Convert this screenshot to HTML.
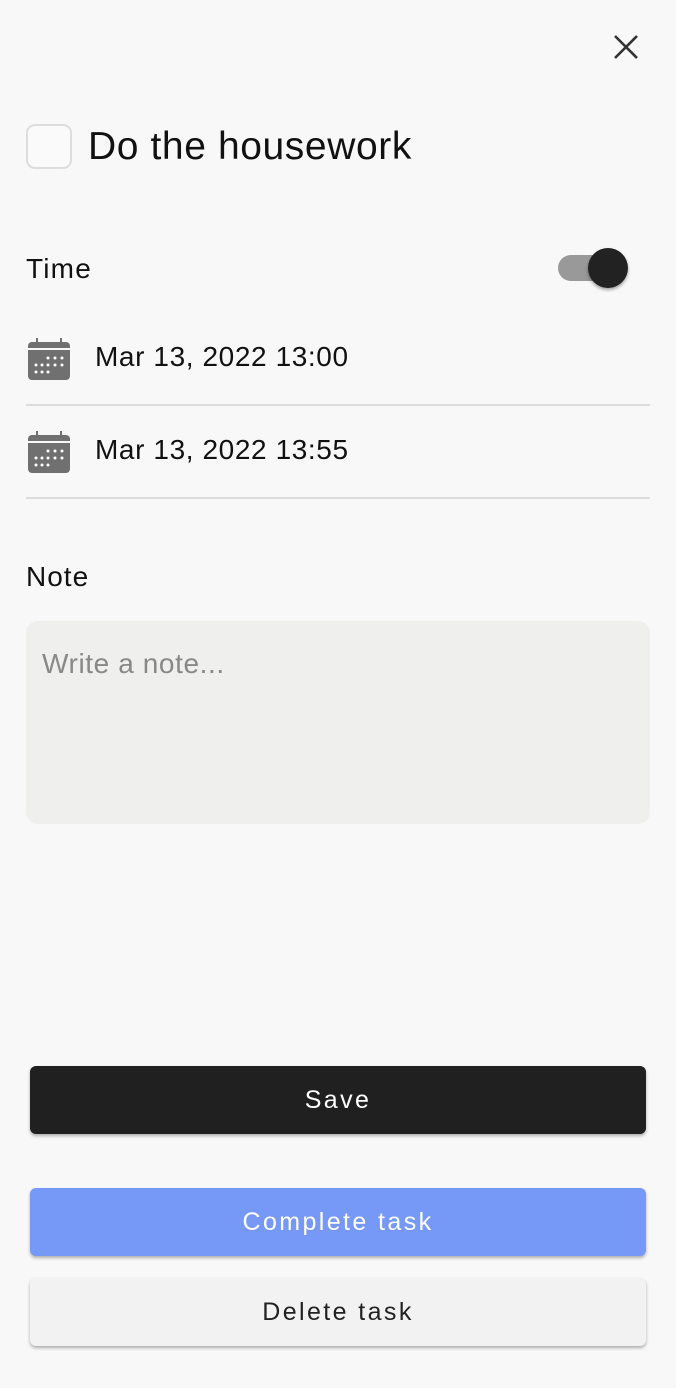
<!DOCTYPE html>
<html><head><meta charset="utf-8"><style>
*{box-sizing:border-box;margin:0;padding:0}
body{width:676px;height:1388px;background:#f8f8f8;font-family:"Liberation Sans",sans-serif;color:#111;position:relative;overflow:hidden}
.abs{position:absolute}
.btn{position:absolute;left:30px;width:616px;height:68px;border-radius:6px;display:flex;align-items:center;justify-content:center;font-size:25px;letter-spacing:2.4px;box-shadow:0 2px 3px rgba(0,0,0,.3)}
.line{position:absolute;left:26px;width:624px;height:2px;background:#dcdcdc}
.t28{font-size:28px;line-height:34px;letter-spacing:0.6px}
</style></head><body>
<svg class="abs" style="left:612px;top:33px" width="28" height="28" viewBox="0 0 28 28"><path d="M3 3L25 25M25 3L3 25" stroke="#333" stroke-width="2.6"/></svg>
<div class="abs" style="left:26px;top:124px;width:46px;height:45px;border:2px solid #ddd;border-radius:9px;background:#fafafa"></div>
<div class="abs" style="left:88px;top:124px;font-size:39px;line-height:46px;letter-spacing:0.6px">Do the housework</div>
<div class="abs t28" style="left:26px;top:252px;letter-spacing:1.2px">Time</div>
<div class="abs" style="left:558px;top:255px;width:60px;height:26px;border-radius:13px;background:#999"></div>
<div class="abs" style="left:588px;top:248px;width:40px;height:40px;border-radius:50%;background:#222;box-shadow:0 2px 3px rgba(0,0,0,.35)"></div>
<svg class="abs" style="left:28px;top:338px" width="42" height="42" viewBox="0 0 42 42"><rect x="0" y="4" width="42" height="38" rx="4" fill="#707070"/><rect x="0" y="10" width="42" height="2" fill="#f8f8f8"/><rect x="8" y="0" width="2" height="6" fill="#707070"/><rect x="32" y="0" width="2" height="6" fill="#707070"/><g fill="#fff"><circle cx="20" cy="20" r="1.5"/><circle cx="27" cy="20" r="1.5"/><circle cx="34" cy="20" r="1.5"/><circle cx="8" cy="27" r="1.5"/><circle cx="14" cy="27" r="1.5"/><circle cx="20" cy="27" r="1.5"/><circle cx="27" cy="27" r="1.5"/><circle cx="34" cy="27" r="1.5"/><circle cx="8" cy="34" r="1.5"/><circle cx="14" cy="34" r="1.5"/><circle cx="20" cy="34" r="1.5"/></g></svg>
<div class="abs t28" style="left:95px;top:340px">Mar 13, 2022 13:00</div>
<div class="line" style="top:404px"></div>
<svg class="abs" style="left:28px;top:431px" width="42" height="42" viewBox="0 0 42 42"><rect x="0" y="4" width="42" height="38" rx="4" fill="#707070"/><rect x="0" y="10" width="42" height="2" fill="#f8f8f8"/><rect x="8" y="0" width="2" height="6" fill="#707070"/><rect x="32" y="0" width="2" height="6" fill="#707070"/><g fill="#fff"><circle cx="20" cy="20" r="1.5"/><circle cx="27" cy="20" r="1.5"/><circle cx="34" cy="20" r="1.5"/><circle cx="8" cy="27" r="1.5"/><circle cx="14" cy="27" r="1.5"/><circle cx="20" cy="27" r="1.5"/><circle cx="27" cy="27" r="1.5"/><circle cx="34" cy="27" r="1.5"/><circle cx="8" cy="34" r="1.5"/><circle cx="14" cy="34" r="1.5"/><circle cx="20" cy="34" r="1.5"/></g></svg>
<div class="abs t28" style="left:95px;top:433px">Mar 13, 2022 13:55</div>
<div class="line" style="top:497px"></div>
<div class="abs t28" style="left:26px;top:560px;letter-spacing:1px">Note</div>
<div class="abs" style="left:26px;top:621px;width:624px;height:203px;border-radius:12px;background:#efefed"></div>
<div class="abs t28" style="left:42px;top:647px;color:#888">Write a note...</div>
<div class="btn" style="top:1066px;background:#202020;color:#fff">Save</div>
<div class="btn" style="top:1188px;background:#7699f7;color:#fff">Complete task</div>
<div class="btn" style="top:1278px;background:#f2f2f2;color:#222">Delete task</div>
</body></html>
